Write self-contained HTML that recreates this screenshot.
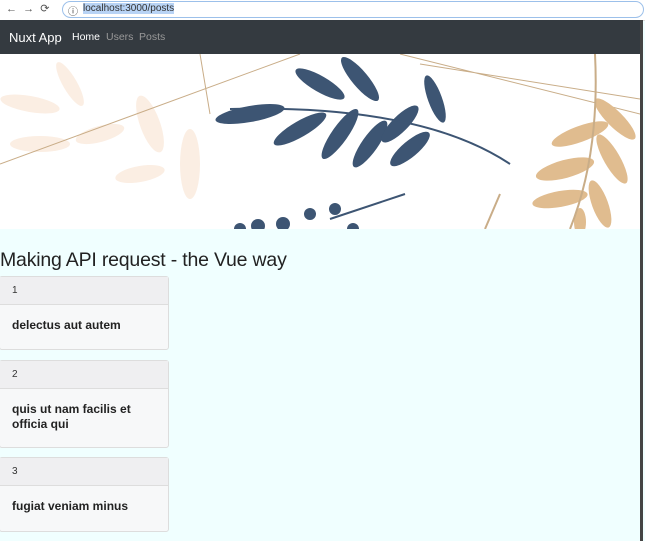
<!DOCTYPE html><html><head><style>
body{margin:0;width:645px;height:541px;overflow:hidden;background:#f0ffff;font-family:"Liberation Sans",sans-serif;position:relative}
.top{position:absolute;left:0;top:0;width:645px;height:20px;background:#fff;border-bottom:1px solid #ddd}
.url{position:absolute;left:62px;top:1px;width:580px;height:15px;border:1px solid #9cc0ea;border-radius:9px}
.url span{position:absolute;left:20px;top:1px;font-size:10px;background:#b8d3f5;color:#333}
.nav{position:absolute;left:0;top:20px;width:640px;height:34px;background:#343a40;color:#fff}
.ban{position:absolute;left:0;top:54px;width:640px;height:175px;background:#fff;overflow:hidden}
.edge{position:absolute;left:640px;top:20px;width:3px;height:521px;background:#444}
h1{position:absolute;left:0;top:249px;margin:0;font-size:19.5px;font-weight:normal;color:#222;letter-spacing:-0.2px}
.card{position:absolute;left:-1px;width:168px;border:1px solid #ddd;border-radius:3px;background:#f7f8f9}
.hd{height:27px;background:#efeff1;border-bottom:1px solid #ddd;font-size:10px;line-height:27px;padding-left:12px;color:#333}
.bd{padding:13px 12px;font-size:12px;font-weight:bold;color:#222;line-height:15px}
</style></head><body>
<div class="top"><span style="position:absolute;left:6px;top:2px;font-size:11px;color:#555">←&nbsp;&nbsp;→&nbsp;&nbsp;⟳</span><div class="url"><span style="left:5px;background:none">ⓘ</span><span>localhost:3000/posts</span></div></div>
<div class="nav"><span style="position:absolute;left:9px;top:10px;font-size:13px">Nuxt App</span><span style="position:absolute;left:72px;top:11px;font-size:10.5px">Home</span><span style="position:absolute;left:106px;top:11px;font-size:10.5px;color:#999">Users</span><span style="position:absolute;left:139px;top:11px;font-size:10.5px;color:#999">Posts</span></div>
<div class="ban"><svg width="640" height="175">
<g fill="#fbeee3"><ellipse cx="30" cy="50" rx="30" ry="8" transform="rotate(10 30 50)"/><ellipse cx="70" cy="30" rx="25" ry="7" transform="rotate(60 70 30)"/><ellipse cx="100" cy="80" rx="25" ry="8" transform="rotate(-15 100 80)"/><ellipse cx="140" cy="120" rx="25" ry="8" transform="rotate(-10 140 120)"/><ellipse cx="190" cy="110" rx="10" ry="35"/><ellipse cx="150" cy="70" rx="10" ry="30" transform="rotate(-20 150 70)"/><ellipse cx="40" cy="90" rx="30" ry="8"/></g>
<path d="M0 110 L300 0 M400 0 L640 60 M420 10 L640 45 M210 60 L200 0" stroke="#c9ad88" fill="none"/>
<g fill="#3d5573"><ellipse cx="250" cy="60" rx="35" ry="8" transform="rotate(-10 250 60)"/><ellipse cx="320" cy="30" rx="28" ry="8" transform="rotate(30 320 30)"/><ellipse cx="360" cy="25" rx="28" ry="8" transform="rotate(50 360 25)"/><ellipse cx="300" cy="75" rx="30" ry="8" transform="rotate(-30 300 75)"/><ellipse cx="340" cy="80" rx="30" ry="8" transform="rotate(-55 340 80)"/><ellipse cx="370" cy="90" rx="28" ry="8" transform="rotate(-55 370 90)"/><ellipse cx="400" cy="70" rx="25" ry="8" transform="rotate(-45 400 70)"/><ellipse cx="410" cy="95" rx="25" ry="8" transform="rotate(-40 410 95)"/><ellipse cx="435" cy="45" rx="25" ry="7" transform="rotate(70 435 45)"/><circle cx="258" cy="172" r="7"/><circle cx="283" cy="170" r="7"/><circle cx="310" cy="160" r="6"/><circle cx="335" cy="155" r="6"/><circle cx="240" cy="175" r="6"/><circle cx="353" cy="175" r="6"/></g>
<path d="M230 55 Q420 50 510 110 M330 165 L405 140" stroke="#3d5573" fill="none" stroke-width="2"/>
<g fill="#e0bc8f"><ellipse cx="580" cy="80" rx="30" ry="8" transform="rotate(-20 580 80)"/><ellipse cx="565" cy="115" rx="30" ry="9" transform="rotate(-15 565 115)"/><ellipse cx="560" cy="145" rx="28" ry="8" transform="rotate(-10 560 145)"/><ellipse cx="615" cy="65" rx="28" ry="8" transform="rotate(45 615 65)"/><ellipse cx="612" cy="105" rx="28" ry="8" transform="rotate(60 612 105)"/><ellipse cx="600" cy="150" rx="25" ry="8" transform="rotate(70 600 150)"/><ellipse cx="580" cy="168" rx="6" ry="14"/></g>
<path d="M595 0 Q600 100 570 175 M500 140 L485 175" stroke="#c9ad88" fill="none" stroke-width="2"/>
</svg></div>
<div class="edge"></div>
<h1>Making API request - the Vue way</h1>
<div class="card" style="top:276px;height:72px"><div class="hd">1</div><div class="bd">delectus aut autem</div></div>
<div class="card" style="top:360px;height:86px"><div class="hd">2</div><div class="bd">quis ut nam facilis et officia qui</div></div>
<div class="card" style="top:457px;height:73px"><div class="hd">3</div><div class="bd">fugiat veniam minus</div></div>
</body></html>
